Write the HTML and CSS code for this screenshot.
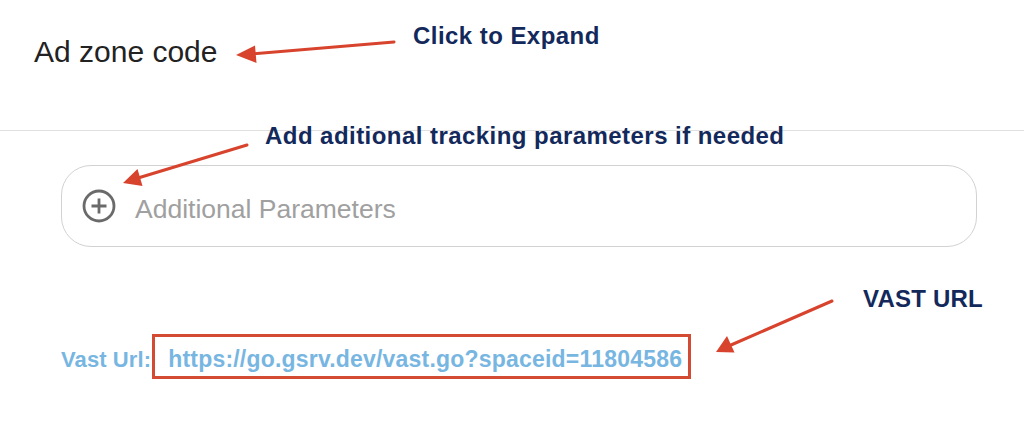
FILE: index.html
```html
<!DOCTYPE html>
<html lang="en">
<head>
<meta charset="utf-8">
<title>Ad zone code</title>
<link rel="stylesheet" href="styles.css">
</head>
<body>
<div class="page">
  <header class="zone-header">
    <h1 class="zone-title">Ad zone code</h1>
  </header>
  <main class="zone-body">
    <div class="param-field">
      <svg class="param-icon" width="34" height="34" viewBox="0 0 34 34" aria-hidden="true">
        <circle cx="17" cy="17" r="15" fill="none" stroke="#6a6a6a" stroke-width="2.8"/>
        <path d="M17 9.5V24.5M9.5 17H24.5" stroke="#6a6a6a" stroke-width="2.8" stroke-linecap="butt"/>
      </svg>
      <span class="param-placeholder">Additional Parameters</span>
    </div>
    <div class="vast-row">
      <span class="vast-label">Vast Url:</span>
      <span class="vast-link">https://go.gsrv.dev/vast.go?spaceid=11804586</span>
    </div>
  </main>

  <div class="note note-expand">Click to Expand</div>
  <div class="note note-params">Add aditional tracking parameters if needed</div>
  <div class="note note-vast">VAST URL</div>

  <svg class="overlay" width="1024" height="424" viewBox="0 0 1024 424" aria-hidden="true">
    <g stroke="#d8432d" stroke-width="3" fill="none" stroke-linecap="round">
      <line x1="394" y1="42" x2="252" y2="54"/>
      <line x1="247" y1="145" x2="138" y2="178"/>
      <line x1="832" y1="301" x2="731" y2="345"/>
    </g>
    <g fill="#d8432d">
      <polygon points="236,55 255,45.5 256.5,63"/>
      <polygon points="123,183 137.5,169 142.5,186"/>
      <polygon points="716,352 727,336 734.5,352.5"/>
    </g>
    <rect x="153.5" y="335.5" width="536" height="42" fill="none" stroke="#d24b32" stroke-width="3"/>
  </svg>
</div>
</body>
</html>
```

FILE: styles.css
```css
* { box-sizing: border-box; }
html, body { margin: 0; padding: 0; background: #ffffff; }
body { font-family: "Liberation Sans", Arial, Helvetica, sans-serif; }

.page {
  position: relative;
  width: 1024px;
  height: 424px;
  overflow: hidden;
}

.zone-header {
  height: 131px;
  padding: 37px 0 0 34px;
  border-bottom: 1px solid #e0e0e0;
}

.zone-title {
  margin: 0;
  font-size: 30px;
  line-height: 30px;
  font-weight: 400;
  color: #222222;
}

.zone-body {
  padding: 34px 47px 0 61px;
}

.param-field {
  display: flex;
  align-items: center;
  gap: 19px;
  height: 82px;
  padding-left: 20px;
  border: 1.5px solid #d2d2d2;
  border-radius: 30px;
}

.param-icon { flex: none; }

.param-placeholder {
  font-size: 26.5px;
  line-height: 26px;
  color: #a0a0a0;
  margin-top: 5px;
}

.vast-row {
  display: flex;
  align-items: baseline;
  gap: 17px;
  margin-top: 101px;
  font-weight: 700;
  color: #78b6e2;
}

.vast-label { font-size: 22px; line-height: 23px; letter-spacing: 0.1px; }
.vast-link { font-size: 23px; line-height: 23px; letter-spacing: 0.2px; }

.note {
  position: absolute;
  font-size: 24px;
  line-height: 24px;
  font-weight: 700;
  letter-spacing: 0.45px;
  color: #13295b;
  white-space: nowrap;
}
.note-expand { left: 413px; top: 24px; }
.note-params { left: 265px; top: 124px; }
.note-vast { left: 863px; top: 287px; letter-spacing: 0.2px; }

.overlay {
  position: absolute;
  left: 0;
  top: 0;
  pointer-events: none;
}
```
